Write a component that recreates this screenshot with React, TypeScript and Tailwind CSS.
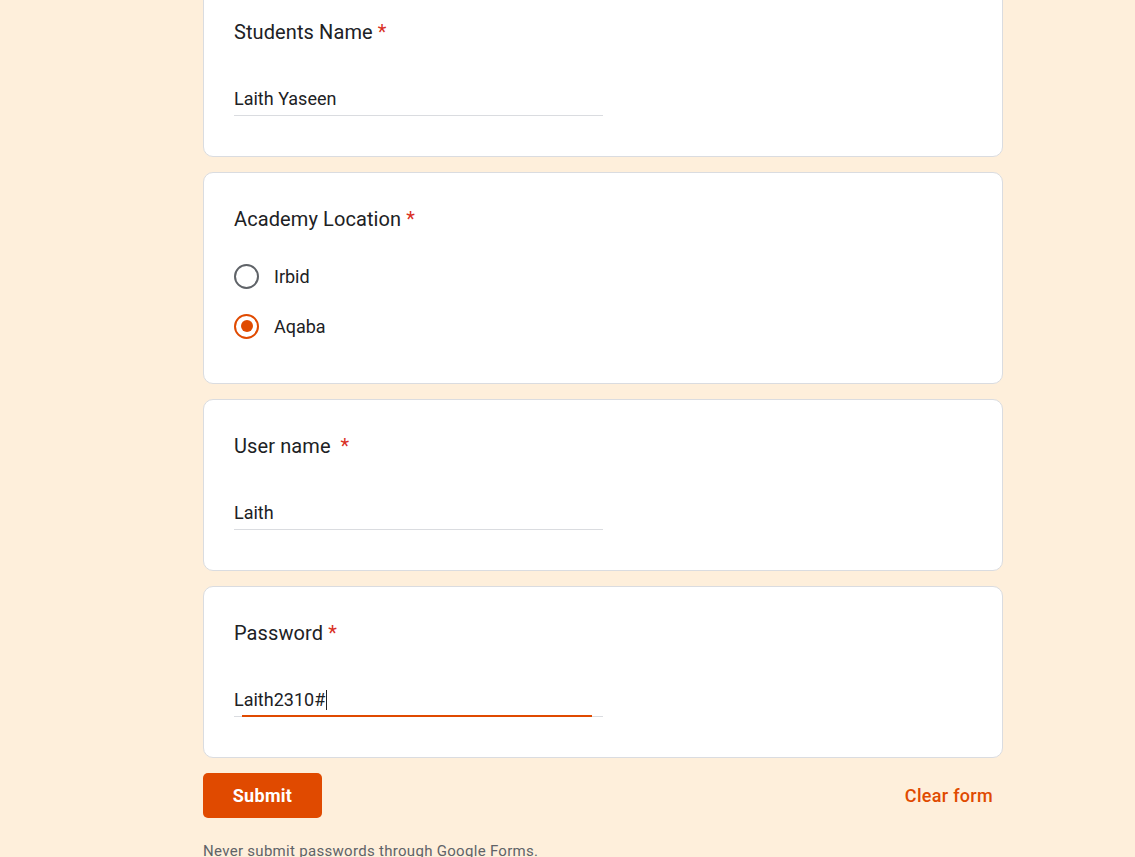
import React from "react";

const font = { fontFamily: "Roboto, 'Liberation Sans', Arial, sans-serif" };

function Title({ children, gap = false }: { children: React.ReactNode; gap?: boolean }) {
  return (
    <div className="h-[30px] text-[20px] leading-[30px] text-[#202124] tracking-[0.1px]">
      {children}
      {gap ? <span className="ml-[10px] text-[#d93025]">*</span> : <span className="ml-[5px] text-[#d93025]">*</span>}
    </div>
  );
}

function TextCard({
  title,
  value,
  gap,
  focused,
}: {
  title: string;
  value: string;
  gap?: boolean;
  focused?: boolean;
}) {
  return (
    <div className="rounded-[10px] border border-[#dadce0] bg-white pl-[30px] pr-[30px] pt-[31px] pb-[40px]">
      <Title gap={gap}>{title}</Title>
      <div className="relative mt-[40px] w-[369px] border-b border-[#dadce0] pb-[4px]">
        <div className="flex h-[24px] items-center text-[18px] leading-[24px] text-[#202124]">
          {value}
          {focused && <span className="ml-[1px] inline-block h-[20px] w-[1px] bg-[#202124]" />}
        </div>
        {focused && <div className="absolute left-[8px] right-[11px] bottom-[-1px] h-[2px] bg-[#e04a00]" />}
      </div>
    </div>
  );
}

function Radio({ checked, label }: { checked?: boolean; label: string }) {
  return (
    <div className="flex h-[50px] items-center">
      <div
        className={`flex h-[25px] w-[25px] items-center justify-center rounded-full border-[2.5px] ${
          checked ? "border-[#e04a00]" : "border-[#5f6368]"
        }`}
      >
        {checked && <div className="h-[12px] w-[12px] rounded-full bg-[#e04a00]" />}
      </div>
      <span className="ml-[15px] text-[18px] text-[#202124]">{label}</span>
    </div>
  );
}

export default function App() {
  return (
    <div className="min-h-[857px] w-full overflow-hidden bg-[#feefdb]" style={font}>
      <div className="w-[800px]" style={{ marginLeft: 203 }}>
        <div className="-mt-[15px] flex flex-col gap-[15px]">
          <TextCard title="Students Name" value="Laith Yaseen" />
          <div className="rounded-[10px] border border-[#dadce0] bg-white pl-[30px] pr-[30px] pt-[31px] pb-[32px]">
            <Title>Academy Location</Title>
            <div className="mt-[17px]">
              <Radio label="Irbid" />
              <Radio label="Aqaba" checked />
            </div>
          </div>
          <TextCard title="User name" value="Laith" gap />
          <TextCard title="Password" value="Laith2310#" focused />
        </div>
        <div className="mt-[15px] flex items-center justify-between">
          <button className="h-[45px] w-[119px] rounded-[5px] bg-[#e04a00] text-[18px] font-bold text-white tracking-[0.3px]">
            Submit
          </button>
          <span className="mr-[10px] text-[18px] font-medium text-[#e04a00] tracking-[0.3px]">Clear form</span>
        </div>
        <div className="mt-[23px] text-[15px] leading-[20px] text-[#5f6368] tracking-[0.3px]">
          Never submit passwords through Google Forms.
        </div>
      </div>
    </div>
  );
}
